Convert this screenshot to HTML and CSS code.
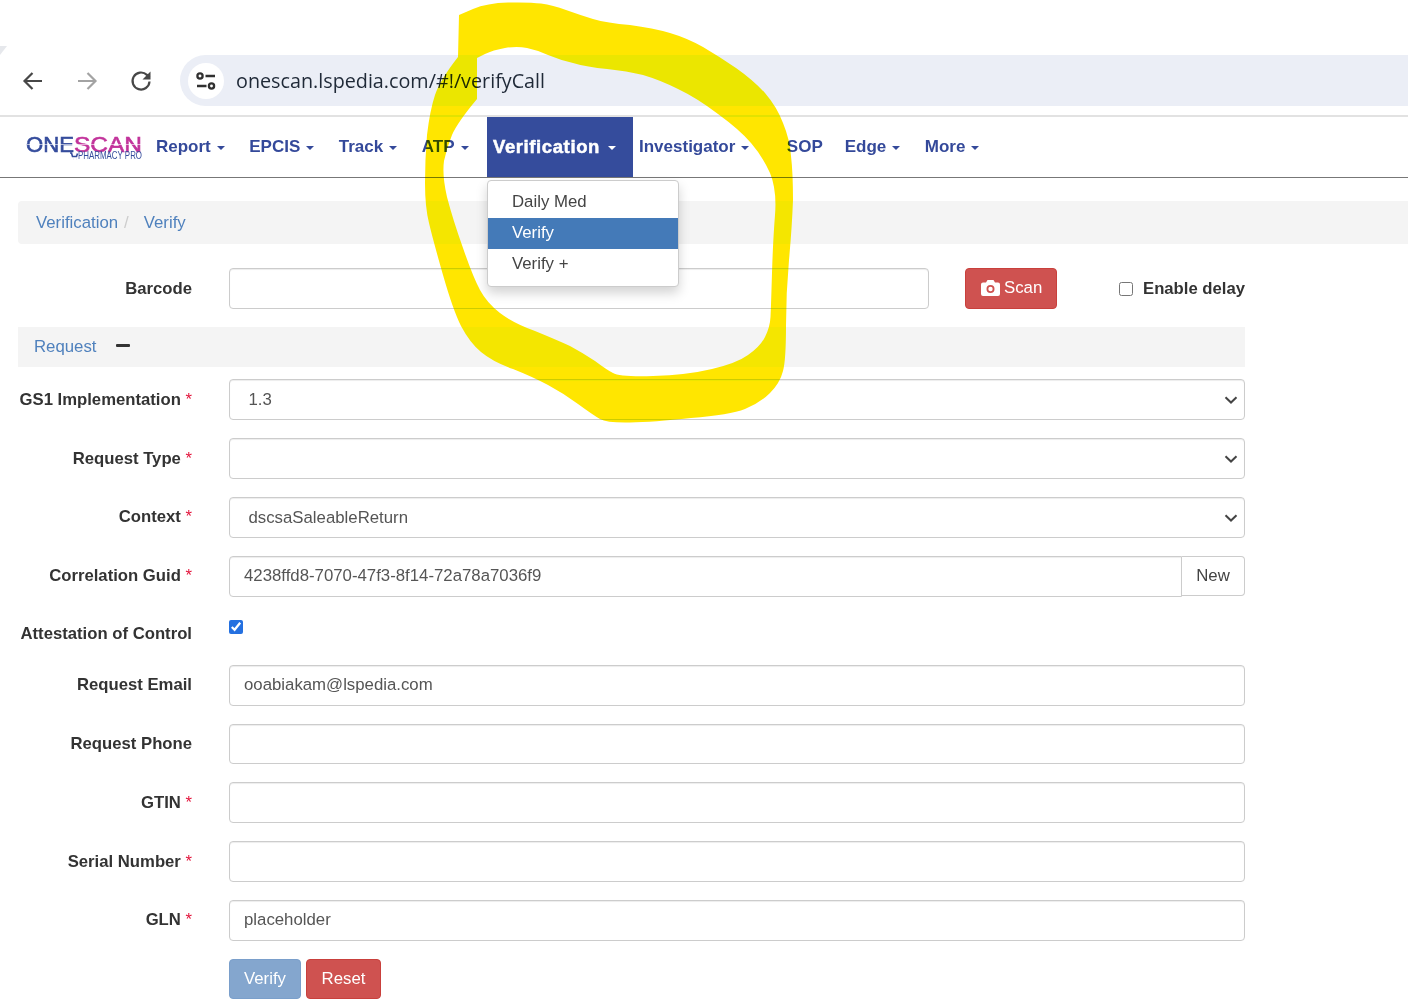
FILE: index.html

```html
<!DOCTYPE html>
<html lang="en">

<head>
    <meta charset="UTF-8">
    <title>OneScan - Verify</title>
    <link rel="stylesheet" href="styles.css">
</head>

<body>
    <div class="browser-bar">
        <span class="tab-corner"></span>
        <svg class="tool tool-back" width="24" height="24" viewBox="0 0 24 24">
            <path d="M21 12H4M11.5 4 3.5 12l8 8" fill="none" stroke="#474747" stroke-width="2.2" />
        </svg>
        <svg class="tool tool-forward" width="24" height="24" viewBox="0 0 24 24">
            <path d="M3 12h17M12.500 4l8 8-8 8" fill="none" stroke="#a3a3a3" stroke-width="2.2" />
        </svg>
        <svg class="tool tool-reload" width="24" height="24" viewBox="0 0 24 24">
            <path d="M20.500 12.500a8.500 8.500 0 1 1-2.600-6.600L20.500 8.500" fill="none" stroke="#474747" stroke-width="2.200" />
            <path d="M21.500 2.500v8h-8z" fill="#474747" />
        </svg>
        <div class="address">
            <span class="site-icon">
                <svg width="22" height="18" viewBox="0 0 22 18">
                    <circle cx="5" cy="4" r="2.600" fill="none" stroke="#303030" stroke-width="2.300" />
                    <path d="M10.500 4H20M2 14h9.500" stroke="#303030" stroke-width="2.300" />
                    <circle cx="16.500" cy="14" r="2.600" fill="none" stroke="#303030" stroke-width="2.300" />
                </svg>
            </span>
            <span class="url">onescan.lspedia.com/#!/verifyCall</span>
        </div>
    </div>

    <nav class="navbar">
        <svg class="logo" width="120" height="30" viewBox="0 0 120 30">
            <text x="0" y="20" class="logo-one" textLength="48" lengthAdjust="spacingAndGlyphs">ONE</text>
            <text x="48" y="20" class="logo-scan" textLength="68" lengthAdjust="spacingAndGlyphs">SCAN</text>
            <path d="M1 12.500h115" stroke="#fff" stroke-width="1" opacity=".6" />
            <path d="M44 21h1.500l1 3.500h4l1-3M47 27h.1M50 27h.1" fill="none" stroke="#354c9c" stroke-width="1.600" />
            <text x="52" y="27" class="logo-sub" textLength="64" lengthAdjust="spacingAndGlyphs">PHARMACY PRO</text>
        </svg>
        <a class="nav-item">Report <span class="caret"></span></a>
        <a class="nav-item">EPCIS <span class="caret"></span></a>
        <a class="nav-item">Track <span class="caret"></span></a>
        <a class="nav-item">ATP <span class="caret"></span></a>
        <div class="nav-item active">
            <span class="active-label">Verification</span> <span class="caret"></span>
            <ul class="dropdown">
                <li>Daily Med</li>
                <li class="selected">Verify</li>
                <li>Verify +</li>
            </ul>
        </div>
        <a class="nav-item investigator">Investigator <span class="caret"></span></a>
        <a class="nav-item sop">SOP</a>
        <a class="nav-item">Edge <span class="caret"></span></a>
        <a class="nav-item">More <span class="caret"></span></a>
    </nav>

    <div class="breadcrumb">
        <a>Verification</a><span class="sep">/</span><a>Verify</a>
    </div>

    <form class="verify-form">
        <div class="barcode-row">
            <label class="label">Barcode</label>
            <input class="field barcode" type="text">
            <button type="button" class="btn btn-red scan">
                <svg width="19" height="16" viewBox="0 0 19 16">
                    <path fill-rule="evenodd" fill="#fff"
                        d="M2 2.500h3L6.500 0h6L14 2.500h3a2 2 0 0 1 2 2V14a2 2 0 0 1-2 2H2a2 2 0 0 1-2-2V4.500a2 2 0 0 1 2-2zM9.500 5a4 4 0 1 0 0 8 4 4 0 0 0 0-8zm0 1.800a2.200 2.200 0 1 1 0 4.400 2.200 2.200 0 0 1 0-4.400z" />
                </svg>
                Scan
            </button>
            <label class="delay"><input type="checkbox" class="delay-check">Enable delay</label>
        </div>

        <div class="section-head">
            <a>Request</a>
            <span class="collapse-minus"></span>
        </div>

        <div class="row">
            <label class="label">GS1 Implementation <i>*</i></label>
            <div class="select-wrap">
                <select class="field">
                    <option>1.3</option>
                </select>
                <svg class="chevron" width="14" height="8" viewBox="0 0 14 8">
                    <path d="M1.500 1.200 7 6.500l5.500-5.300" fill="none" stroke="#444" stroke-width="2" />
                </svg>
            </div>
        </div>
        <div class="row">
            <label class="label">Request Type <i>*</i></label>
            <div class="select-wrap">
                <select class="field">
                    <option></option>
                </select>
                <svg class="chevron" width="14" height="8" viewBox="0 0 14 8">
                    <path d="M1.500 1.200 7 6.500l5.500-5.300" fill="none" stroke="#444" stroke-width="2" />
                </svg>
            </div>
        </div>
        <div class="row row-up">
            <label class="label">Context <i>*</i></label>
            <div class="select-wrap">
                <select class="field">
                    <option>dscsaSaleableReturn</option>
                </select>
                <svg class="chevron" width="14" height="8" viewBox="0 0 14 8">
                    <path d="M1.500 1.200 7 6.500l5.500-5.300" fill="none" stroke="#444" stroke-width="2" />
                </svg>
            </div>
        </div>
        <div class="row row-up">
            <label class="label">Correlation Guid <i>*</i></label>
            <div class="input-group">
                <input class="field" type="text" value="4238ffd8-7070-47f3-8f14-72a78a7036f9">
                <span class="addon">New</span>
            </div>
        </div>
        <div class="row row-check">
            <label class="label">Attestation of Control</label>
            <input type="checkbox" class="attest" checked>
        </div>
        <div class="row row-up">
            <label class="label">Request Email</label>
            <input class="field" type="text" value="ooabiakam@lspedia.com">
        </div>
        <div class="row row-short">
            <label class="label">Request Phone</label>
            <input class="field" type="text">
        </div>
        <div class="row">
            <label class="label">GTIN <i>*</i></label>
            <input class="field" type="text">
        </div>
        <div class="row">
            <label class="label">Serial Number <i>*</i></label>
            <input class="field" type="text">
        </div>
        <div class="row row-up">
            <label class="label">GLN <i>*</i></label>
            <input class="field" type="text" value="placeholder">
        </div>
        <div class="row">
            <span></span>
            <div class="actions">
                <button type="button" class="btn btn-blue">Verify</button>
                <button type="button" class="btn btn-red">Reset</button>
            </div>
        </div>
    </form>

    <!-- highlighter ring drawn over the screenshot -->
    <svg class="highlight" width="1408" height="1002" viewBox="0 0 1408 1002">
        <path fill="#ffe600" fill-rule="evenodd" d="M458 57 L459 15 L473 9 Q487 3 508 2.500 Q530 2 541 3.500 Q553 5 566 10 Q580 15 593 19 Q607 23 630 25 Q653 28 670 33 Q687 38 703 47 Q720 57 736 68 Q753 80 765 93 Q777 107 783 123 Q790 140 791 156 Q793 173 793 200 Q792 227 789 260 Q786 293 786 326 Q786 360 783 371 Q780 383 770 393 Q760 403 745 409 Q730 415 691 418 Q653 422 630 422.500 Q607 423 600 419 Q593 415 578 404 Q563 393 548 385 Q533 377 513 369 Q493 362 481 352 Q470 343 461 326 Q453 310 443 275 Q433 240 429 223 Q425 207 425 183 Q425 160 427 135 Q430 110 435 95 Q440 80 458 57 Z
            M477 99 L477 58 L485 54 Q493 50 505 48 Q517 46 527 48 Q537 50 548 55 Q560 60 573 63 Q587 67 607 69 Q627 71 643 75 Q660 80 678 89 Q697 98 718 114 Q740 130 751 143 Q763 157 770 173 Q777 190 775 215 Q773 240 772 273 Q771 307 770.500 317 Q770 327 765 337 Q760 347 748 355 Q737 363 712 369 Q687 375 653 376 Q620 377 613 373 Q607 370 595 361 Q583 353 570 346 Q557 340 535 331 Q513 323 500 313 Q487 303 480 290 Q473 277 463 248 Q453 220 447 197 Q442 175 444 161 Q447 147 452 135 Q457 123 477 99 Z" />
    </svg>
</body>

</html>
```

FILE: styles.css

```css
body {
    margin: 0;
    background: #fff;
    color: #333;
    font-family: "Liberation Sans", Arial, sans-serif;
    font-size: 16.800px;
    position: relative;
    overflow-x: hidden;
}

/* browser chrome */
.browser-bar {
    height: 115px;
    display: flex;
    align-items: flex-end;
    padding-bottom: 9px;
    box-sizing: border-box;
    position: relative;
}

.tab-corner {
    position: absolute;
    left: 0;
    top: 46px;
    width: 7px;
    height: 9px;
    background: #e6e8ec;
    clip-path: polygon(0 0, 100% 0, 0 100%);
}

.tool {
    flex: none;
    margin-bottom: 13px;
}

.tool-back {
    margin-left: 21px;
}

.tool-forward {
    margin-left: 30px;
}

.tool-reload {
    margin-left: 30px;
}

.address {
    flex: 1;
    margin-left: 27px;
    height: 51px;
    background: #ebeef6;
    border-radius: 26px 0 0 26px;
    display: flex;
    align-items: center;
    padding-left: 8px;
}

.site-icon {
    width: 36px;
    height: 36px;
    border-radius: 50%;
    background: #fff;
    display: flex;
    align-items: center;
    justify-content: center;
}

.url {
    margin-left: 12px;
    font-family: "Open Sans", sans-serif;
    font-size: 19.750px;
    color: #1f2937;
}

/* app navbar */
.navbar {
    height: 60px;
    border-top: 2px solid #e2e2e2;
    border-bottom: 1px solid #777;
    display: flex;
    align-items: stretch;
}

.logo {
    flex: none;
    margin: 15px 4px 0 26px;
    overflow: visible;
}

.logo-one,
.logo-scan {
    font-size: 22px;
    font-family: "Liberation Sans", sans-serif;
    stroke-width: 0.6px;
}

.logo-one {
    fill: #354c9c;
    stroke: #354c9c;
}

.logo-scan {
    fill: #c2339b;
    stroke: #c2339b;
}

.logo-sub {
    font-size: 11px;
    fill: #354c9c;
    font-family: "Liberation Sans", sans-serif;
}

.nav-item {
    display: flex;
    align-items: center;
    gap: 6px;
    padding: 0 18.500px 1px 6px;
    color: #34499a;
    font-weight: bold;
    font-size: 17px;
    position: relative;
    white-space: nowrap;
}

.investigator {
    margin-right: 13px;
}

.sop {
    margin-right: -2.500px;
}

.caret {
    display: inline-block;
    width: 0;
    height: 0;
    margin-top: 3px;
    border-top: 4px solid currentColor;
    border-left: 4px solid transparent;
    border-right: 4px solid transparent;
}

.nav-item.active {
    background: #354c9c;
    color: #fff;
    width: 146px;
    box-sizing: border-box;
    padding: 0 0 1px 6px;
    gap: 8px;
}

.active-label {
    font-size: 18.500px;
    letter-spacing: 0.6px;
    -webkit-text-stroke: 0.5px #fff;
}

.dropdown {
    position: absolute;
    top: 63px;
    left: 0;
    width: 192px;
    box-sizing: border-box;
    margin: 0;
    padding: 6px 0 6px;
    list-style: none;
    background: #fff;
    border: 1px solid #ccc;
    border-radius: 4px;
    box-shadow: 0 6px 12px rgba(0, 0, 0, 0.175);
    color: #444;
    font-weight: normal;
    font-size: 16.800px;
}

.dropdown li {
    height: 31px;
    line-height: 29px;
    padding-left: 24px;
}

.dropdown .selected {
    background: #447ab8;
    color: #fff;
}

/* page content */
.breadcrumb {
    margin: 23px 0 0 18px;
    height: 43px;
    background: #f4f4f4;
    border-radius: 4px 0 0 4px;
    display: flex;
    align-items: center;
    padding-left: 18px;
    color: #4f81bd;
}

.sep {
    color: #ccc;
    margin: 0 15px 0 6px;
}

.verify-form {
    margin: 24px 0 0 18px;
    width: 1227px;
}

.label {
    font-weight: bold;
    font-size: 16.700px;
    text-align: right;
    white-space: nowrap;
}

.label i {
    color: #e3143c;
    font-style: normal;
    font-weight: normal;
}

.field {
    width: 100%;
    height: 41px;
    box-sizing: border-box;
    border: 1px solid #ccc;
    border-radius: 4px;
    background: #fff;
    color: #555;
    font: 16.800px "Liberation Sans", Arial, sans-serif;
    padding: 0 14px 2px;
    box-shadow: inset 0 1px 1px rgba(0, 0, 0, 0.075);
}

select.field {
    padding: 0 18.500px;
    appearance: none;
    display: block;
}

.select-wrap {
    position: relative;
}

.chevron {
    position: absolute;
    right: 7px;
    top: 17px;
    pointer-events: none;
}

.barcode-row {
    display: flex;
    align-items: center;
    height: 41px;
}

.barcode-row .label {
    width: 174px;
    flex: none;
}

.field.barcode {
    width: 700px;
    flex: none;
    margin-left: 37px;
}

.btn {
    height: 41px;
    box-sizing: border-box;
    border-radius: 4px;
    border: 1px solid;
    color: #fff;
    font: 16.800px "Liberation Sans", Arial, sans-serif;
    padding: 0;
}

.btn-red {
    background: #cf5250;
    border-color: #c9403c;
}

.btn-blue {
    background: #84a6ce;
    border-color: #7a9fcb;
}

.scan {
    flex: none;
    width: 92px;
    margin-left: 36px;
    display: flex;
    align-items: center;
    gap: 4px;
    padding: 0 0 2px 15px;
}

.delay {
    flex: none;
    margin-left: 62px;
    font-weight: bold;
    font-size: 16.700px;
    display: flex;
    align-items: center;
    white-space: nowrap;
}

.delay-check {
    width: 14px;
    height: 14px;
    margin: 0 10px 0 0;
}

.section-head {
    margin: 18px 0 12px;
    height: 40px;
    background: #f4f4f4;
    display: flex;
    align-items: center;
    padding-left: 16px;
    color: #4f81bd;
}

.collapse-minus {
    width: 14px;
    height: 3px;
    border-radius: 1px;
    background: #333;
    margin: 0 0 3px 19px;
}

.row {
    display: grid;
    grid-template-columns: 174px 1016px;
    column-gap: 37px;
    align-items: center;
    margin-bottom: 18px;
}

.row-up .label {
    padding-bottom: 2px;
}

.row-check {
    height: 32px;
    align-items: end;
}

.row-check .label {
    padding-bottom: 3px;
}

.attest {
    width: 14px;
    height: 14px;
    margin: 0 0 13px;
    accent-color: #2470e0;
}

.row-short .field {
    height: 40px;
}

.input-group {
    display: flex;
    align-items: flex-start;
}

.input-group .field {
    border-radius: 4px 0 0 4px;
    flex: 1;
    width: auto;
}

.addon {
    flex: none;
    width: 63px;
    height: 40px;
    box-sizing: border-box;
    border: 1px solid #ccc;
    border-left: 0;
    border-radius: 0 4px 4px 0;
    text-align: center;
    line-height: 38px;
    color: #444;
}

.actions {
    display: flex;
    gap: 5px;
}

.actions .btn {
    height: 40px;
    padding-bottom: 1px;
}

.actions .btn-blue {
    width: 72px;
}

.actions .btn-red {
    width: 75px;
}

.highlight {
    position: absolute;
    left: 0;
    top: 0;
    pointer-events: none;
    mix-blend-mode: darken;
}
```
